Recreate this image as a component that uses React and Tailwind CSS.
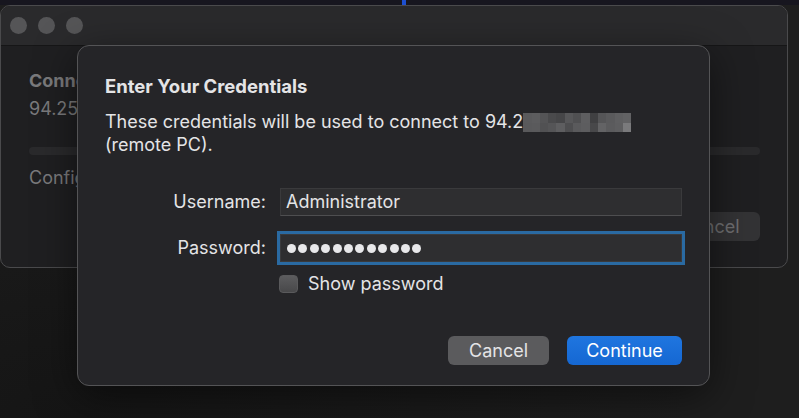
import { useState } from "react";

// pixelated IP mosaic (2 rows x 13 cols)
const MOSAIC = [
  ["#5a5a5c", "#5c5c5e", "#545456", "#4a4a4c", "#464648", "#575759", "#505052", "#5e5e60", "#404042", "#555557", "#5a5a5c", "#5f5f61", "#626264"],
  ["#59595b", "#5a5a5c", "#515153", "#555557", "#5e5e60", "#4e4e50", "#5a5a5c", "#5d5d5f", "#48484a", "#636365", "#5b5b5d", "#5e5e60", "#7a7a7c"],
];

const BackWindow = () => (
  <div className="w-[788px] h-[263px] rounded-[10px] border border-[#4a4a4c] bg-[#1f1f21] overflow-hidden">
    {/* title bar */}
    <div className="h-[40px] bg-[#2a2a2c] border-b border-[#161617] flex items-center gap-[11px] pl-[9px]">
      <span className="w-[17px] h-[17px] rounded-full bg-[#555557]" />
      <span className="w-[17px] h-[17px] rounded-full bg-[#555557]" />
      <span className="w-[17px] h-[17px] rounded-full bg-[#555557]" />
    </div>
    <div className="pl-[28px] pr-[27px] pt-[23px] text-[18px] text-[#7a7a7c]">
      <p className="font-bold leading-[24px]">Connecting</p>
      <p className="leading-[24px] mt-[4px]">94.250.10.12</p>
      <div className="mt-[26px] h-[8px] rounded-full bg-[#2a2a2c]" />
      <p className="leading-[24px] mt-[11px]">Configuring remote PC...</p>
      <div className="flex justify-end mt-[22px]">
        <div className="w-[100px] h-[29px] rounded-[6px] bg-[#333335] flex items-center justify-center text-[#6e6e70]">
          Cancel
        </div>
      </div>
    </div>
  </div>
);

const App = () => {
  const [showPassword, setShowPassword] = useState(false);

  return (
    <div
      className="relative w-[799px] h-[418px] overflow-hidden bg-[radial-gradient(ellipse_at_10%_100%,#151515,#1e1e1e_60%)]"
      style={{ fontFamily: "Inter, 'Noto Sans', sans-serif" }}
    >
      {/* desktop strip peeking above */}
      <div className="h-[5px] bg-[#17161f] relative">
        <div className="absolute left-[402px] top-0 w-[4px] h-[5px] bg-[#1d4fd0]" />
      </div>

      <BackWindow />

      {/* credentials sheet */}
      <div className="absolute left-[77px] top-[45px] w-[633px] h-[341px] rounded-[12px] border border-[#545456] bg-[#252528] shadow-[0_10px_40px_rgba(0,0,0,0.5)] pl-[27px] pr-[27px] pt-[28px] text-[#e4e4e6]">
        <h1 className="text-[18.5px] font-bold leading-[24px]">Enter Your Credentials</h1>
        <p className="mt-[12px] text-[18px] leading-[23px]">
          These credentials will be used to connect to 94.2
          <span className="relative inline-block w-[108px] h-[19px] align-[-4px]">
            <span className="absolute inset-0 grid grid-cols-[repeat(13,8.3px)] grid-rows-2">
              {MOSAIC.flat().map((c, i) => (
                <span key={i} style={{ backgroundColor: c }} />
              ))}
            </span>
          </span>
          <br />
          (remote PC).
        </p>

        <div className="mt-[32px] flex flex-col text-[18px] leading-[22px]">
          <div className="flex items-center h-[28px]">
            <label className="w-[161px] text-right">Username:</label>
            <div className="ml-[14px] w-[402px] h-[28px] bg-[#2e2e30] border border-[#3a3a3c] border-b-[#4e4e50] flex items-center px-[5px]">
              Administrator
            </div>
          </div>
          <div className="flex items-center h-[28px] mt-[18px]">
            <label className="w-[161px] text-right">Password:</label>
            <div className="ml-[14px] w-[402px] h-[28px] bg-[#2e2e30] border border-[#3a3a3c] ring-[3px] ring-[#2a6aa2] flex items-center gap-[2.4px] px-[6px]">
              {showPassword
                ? "Password1234"
                : Array.from({ length: 12 }).map((_, i) => (
                    <span key={i} className="w-[9px] h-[9px] rounded-full bg-[#e8e8ea]" />
                  ))}
            </div>
          </div>
          <label className="flex items-center h-[18px] mt-[13px] ml-[174px] cursor-pointer">
            <button
              onClick={() => setShowPassword(!showPassword)}
              className="w-[19px] h-[18px] rounded-[4px] bg-gradient-to-b from-[#5c5c5e] to-[#48484a] border border-[#5a5a5c]"
            />
            <span className="ml-[10px]">Show password</span>
          </label>
        </div>

        <div className="flex justify-end gap-[18px] mt-[43px] text-[18px]">
          <button className="w-[101px] h-[29px] rounded-[6px] bg-[#5b5b5d] text-[#e4e4e6]">Cancel</button>
          <button className="w-[115px] h-[29px] rounded-[6px] bg-gradient-to-b from-[#1f76e0] to-[#1567d2] text-white">
            Continue
          </button>
        </div>
      </div>
    </div>
  );
};

export default App;
